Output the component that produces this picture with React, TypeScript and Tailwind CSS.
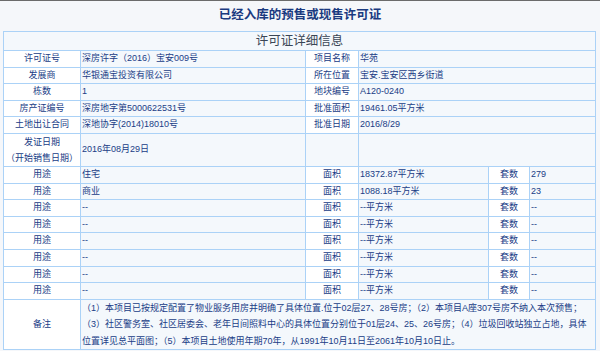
import React from "react";

const B = "border border-[#abd2f7]";
const LBL = `${B} bg-white text-center p-0 h-[15.6px] leading-[15.6px] align-middle`;
const VAL = `${B} bg-[#f4f8fc] text-left pl-[1px] p-0 h-[15.6px] leading-[15.6px] align-middle`;

export default function App() {
  const top: [string, string, string, string][] = [
    ["许可证号", "深房许字（2016）宝安009号", "项目名称", "华苑"],
    ["发展商", "华银通宝投资有限公司", "所在位置", "宝安.宝安区西乡街道"],
    ["栋数", "1", "地块编号", "A120-0240"],
    ["房产证编号", "深房地字第5000622531号", "批准面积", "19461.05平方米"],
    ["土地出让合同", "深地协字(2014)18010号", "批准日期", "2016/8/29"],
  ];
  const uses: [string, string, string][] = [
    ["住宅", "18372.87平方米", "279"],
    ["商业", "1088.18平方米", "23"],
    ["--", "--平方米", "--"],
    ["--", "--平方米", "--"],
    ["--", "--平方米", "--"],
    ["--", "--平方米", "--"],
    ["--", "--平方米", "--"],
    ["--", "--平方米", "--"],
  ];
  return (
    <div
      className="w-[600px] h-[351px] bg-[#f5f7fa] overflow-hidden text-[9px] text-[#203c86]"
      style={{ fontFamily: '"Liberation Sans", "Noto Sans CJK SC", sans-serif' }}
    >
      <div className="h-[1px] bg-[#6b6b6b]" />
      <div className="h-[30px] flex items-center justify-center text-[12.5px] font-bold text-[#1a3a80] pb-[1px]">
        已经入库的预售或现售许可证
      </div>
      <div className="pl-[3px]">
        <table className="border-collapse table-fixed w-[592px]">
          <colgroup>
            <col className="w-[77px]" />
            <col className="w-[225px]" />
            <col className="w-[53px]" />
            <col className="w-[130px]" />
            <col className="w-[41px]" />
            <col className="w-[66px]" />
          </colgroup>
          <tbody>
            <tr>
              <td colSpan={6} className={`${B} bg-[#f4f8fc] text-center text-[12.5px] text-[#3a4656] h-[18px] leading-[18px] p-0`}>
                许可证详细信息
              </td>
            </tr>
            {top.map((r, i) => (
              <tr key={i}>
                <td className={LBL}>{r[0]}</td>
                <td className={VAL}>{r[1]}</td>
                <td className={LBL}>{r[2]}</td>
                <td colSpan={3} className={VAL}>{r[3]}</td>
              </tr>
            ))}
            <tr>
              <td className={`${B} bg-white text-center p-0 h-[32px] leading-[16px]`}>
                发证日期
                <br />
                （开始销售日期）
              </td>
              <td className={`${B} bg-[#f4f8fc] pl-[1px] p-0`}>2016年08月29日</td>
              <td className={`${B} bg-[#f4f8fc] p-0`}></td>
              <td colSpan={3} className={`${B} bg-[#f4f8fc] p-0`}></td>
            </tr>
            {uses.map((u, i) => (
              <tr key={"u" + i}>
                <td className={LBL}>用途</td>
                <td className={VAL}>{u[0]}</td>
                <td className={LBL}>面积</td>
                <td className={VAL}>{u[1]}</td>
                <td className={LBL}>套数</td>
                <td className={VAL}>{u[2]}</td>
              </tr>
            ))}
            <tr>
              <td className={`${B} bg-white text-center p-0 h-[46px]`}>备注</td>
              <td colSpan={5} className={`${B} bg-[#f4f8fc] pl-[1px] pr-[2px] p-0 leading-[16.5px]`}>
                （1）本项目已按规定配置了物业服务用房并明确了具体位置.位于02层27、28号房；（2）本项目A座307号房不纳入本次预售；（3）社区警务室、社区居委会、老年日间照料中心的具体位置分别位于01层24、25、26号房；（4）垃圾回收站独立占地，具体位置详见总平面图；（5）本项目土地使用年期70年，从1991年10月11日至2061年10月10日止。
              </td>
            </tr>
          </tbody>
        </table>
        <div className="mt-[2px] w-[592px] h-[6px] bg-[#e6eff9]" />
      </div>
    </div>
  );
}
